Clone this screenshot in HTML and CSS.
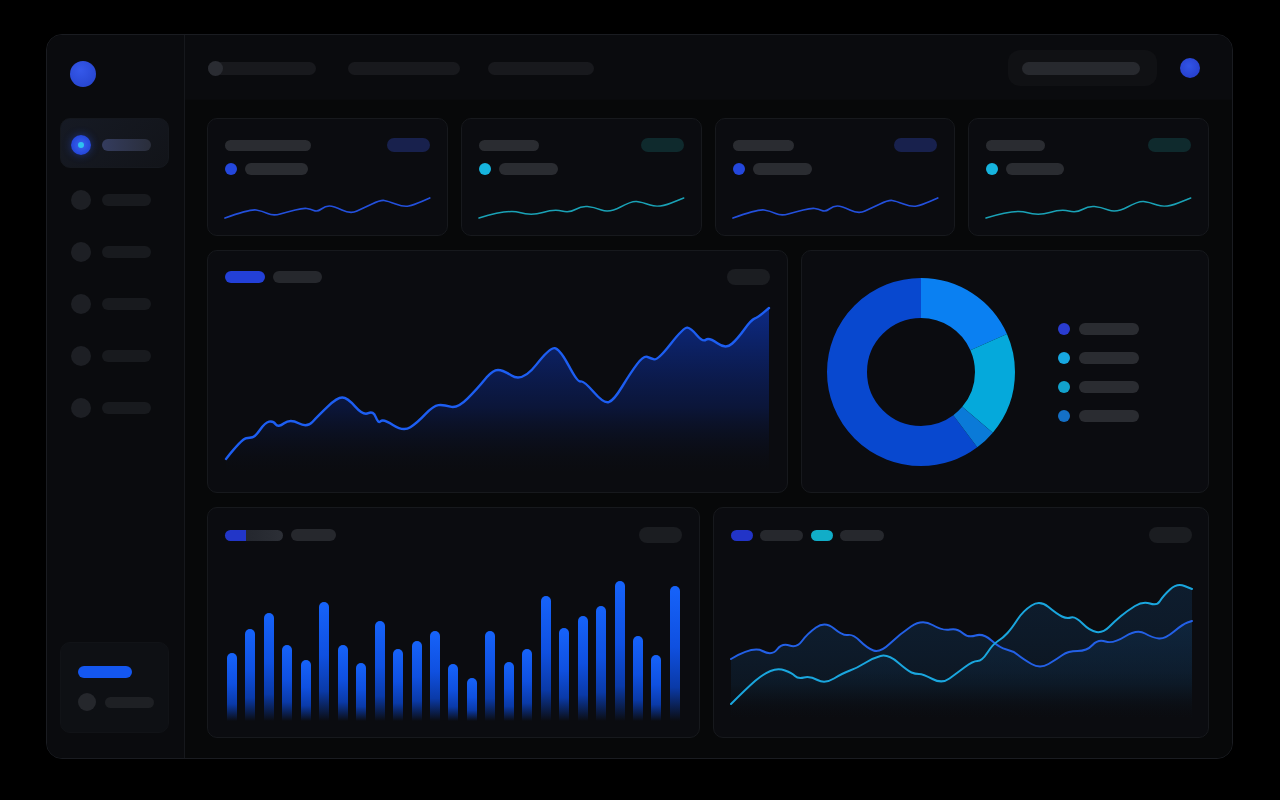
FILE: index.html
```html
<!DOCTYPE html>
<html lang="en">
<head>
<meta charset="utf-8">
<title>Dashboard</title>
<link rel="stylesheet" href="styles.css">
</head>
<body>
<div class="frame">
  <aside class="sidebar">
    <div class="logo"></div>
    <nav class="nav">
      <div class="nav-item active"><span class="nav-icon"><span class="nav-core"></span></span><span class="nav-bar"></span></div>
      <div class="nav-item"><span class="nav-icon"></span><span class="nav-bar"></span></div>
      <div class="nav-item"><span class="nav-icon"></span><span class="nav-bar"></span></div>
      <div class="nav-item"><span class="nav-icon"></span><span class="nav-bar"></span></div>
      <div class="nav-item"><span class="nav-icon"></span><span class="nav-bar"></span></div>
      <div class="nav-item"><span class="nav-icon"></span><span class="nav-bar"></span></div>
    </nav>
    <div class="side-card">
      <div class="side-cta"></div>
      <div class="side-user"><span class="avatar"></span><span class="side-line"></span></div>
    </div>
  </aside>

  <main class="main">
    <header class="topbar">
      <div class="crumbs">
        <span class="crumb crumb-1"><span class="crumb-dot"></span></span>
        <span class="crumb crumb-2"></span>
        <span class="crumb crumb-3"></span>
      </div>
      <div class="top-right">
        <div class="search"><span class="search-line"></span></div>
        <span class="user-dot"></span>
      </div>
    </header>

    <section class="content">
      <div class="stats">
        <div class="card stat-card">
          <div class="stat-head"><span class="sk title-a"></span><span class="badge badge-blue"></span></div>
          <div class="stat-row"><span class="dot dot-blue"></span><span class="sk value-a"></span></div>
          <svg class="spark" viewBox="0 0 204 26" preserveAspectRatio="none"><path class="spark-blue" d="M0,23 Q25,14 31,15 Q37,16 42.5,18.5 Q48,21 55,19 Q62,17 70,15 Q78,13 81.5,13.5 Q85,14 88.5,15.5 Q92,17 96,14 Q100,11 104,11 Q108,11 116.5,15 Q125,19 131.5,16 Q138,13 146.5,9 Q155,5 158.5,5.5 Q162,6 170,9 Q178,12 183,11 Q188,10 196,6.5 L204,3"/></svg>
        </div>
        <div class="card stat-card">
          <div class="stat-head"><span class="sk title-b"></span><span class="badge badge-teal"></span></div>
          <div class="stat-row"><span class="dot dot-cyan"></span><span class="sk value-b"></span></div>
          <svg class="spark" viewBox="0 0 204 26" preserveAspectRatio="none"><path class="spark-teal" d="M0,23 Q29,14 40.5,17.5 Q52,21 63.5,17.5 Q75,14 82.5,16 Q90,18 96,14.5 Q102,11 108,11.5 Q114,12 122,15 Q130,18 141,12 Q152,6 157,6.5 Q162,7 170.5,10 Q179,13 191.5,8 L204,3"/></svg>
        </div>
        <div class="card stat-card">
          <div class="stat-head"><span class="sk title-c"></span><span class="badge badge-blue"></span></div>
          <div class="stat-row"><span class="dot dot-blue"></span><span class="sk value-b"></span></div>
          <svg class="spark" viewBox="0 0 204 26" preserveAspectRatio="none"><path class="spark-blue" d="M0,23 Q25,14 31,15 Q37,16 42.5,18.5 Q48,21 55,19 Q62,17 70,15 Q78,13 81.5,13.5 Q85,14 88.5,15.5 Q92,17 96,14 Q100,11 104,11 Q108,11 116.5,15 Q125,19 131.5,16 Q138,13 146.5,9 Q155,5 158.5,5.5 Q162,6 170,9 Q178,12 183,11 Q188,10 196,6.5 L204,3"/></svg>
        </div>
        <div class="card stat-card">
          <div class="stat-head"><span class="sk title-d"></span><span class="badge badge-teal"></span></div>
          <div class="stat-row"><span class="dot dot-cyan"></span><span class="sk value-c"></span></div>
          <svg class="spark" viewBox="0 0 204 26" preserveAspectRatio="none"><path class="spark-teal" d="M0,23 Q29,14 40.5,17.5 Q52,21 63.5,17.5 Q75,14 82.5,16 Q90,18 96,14.5 Q102,11 108,11.5 Q114,12 122,15 Q130,18 141,12 Q152,6 157,6.5 Q162,7 170.5,10 Q179,13 191.5,8 L204,3"/></svg>
        </div>
      </div>

      <div class="row-mid">
        <div class="card area-card">
          <div class="chart-head">
            <div class="legend"><span class="pill pill-blue w40"></span><span class="pill pill-gray w49"></span></div>
            <span class="pill-btn"></span>
          </div>
          <svg class="area-chart" viewBox="0 0 544 172" preserveAspectRatio="none">
            <defs>
              <linearGradient id="areaFill" x1="0" y1="0" x2="0" y2="1">
                <stop offset="0" stop-color="#0d2f9a" stop-opacity="0.85"/>
                <stop offset="0.6" stop-color="#0b1c55" stop-opacity="0.6"/>
                <stop offset="1" stop-color="#0a0e1a" stop-opacity="0"/>
              </linearGradient>
            </defs>
            <path fill="url(#areaFill)" d="M1,158 Q17,138 21,137.5 Q25,137 27.5,136.5 Q30,136 35,129 Q40,122 44,121 Q48,120 50.5,123.5 Q53,127 59,122.5 Q65,118 73.5,122.5 Q82,127 87.5,121 Q93,115 102.5,106 Q112,97 117,97 Q122,97 130,106 Q138,115 143,112.5 Q148,110 150.5,116.5 Q153,123 155.5,120.5 Q158,118 168,124.5 Q178,131 185,126.5 Q192,122 200,113.5 Q208,105 213,104.5 Q218,104 225,106 Q232,108 242,98 Q252,88 258.5,80 Q265,72 270,70 Q275,68 286,75 Q297,82 311,64 Q325,46 330,48 Q335,50 343.5,66 Q352,82 355,81 Q358,80 368,91.5 Q378,103 383,101.5 Q388,100 396.5,86 Q405,72 411.5,63.5 Q418,55 421.5,56.5 Q425,58 428.5,59 Q432,60 445,43.5 Q458,27 461.5,27.5 Q465,28 471,35 Q477,42 480,39.5 Q483,37 491.5,43 Q500,49 506,43.5 Q512,38 518.5,29 Q525,20 528.5,18.5 Q532,17 537.5,12.5 L543,8 L543,172 L1,172 Z"/>
            <path class="area-line" d="M1,158 Q17,138 21,137.5 Q25,137 27.5,136.5 Q30,136 35,129 Q40,122 44,121 Q48,120 50.5,123.5 Q53,127 59,122.5 Q65,118 73.5,122.5 Q82,127 87.5,121 Q93,115 102.5,106 Q112,97 117,97 Q122,97 130,106 Q138,115 143,112.5 Q148,110 150.5,116.5 Q153,123 155.5,120.5 Q158,118 168,124.5 Q178,131 185,126.5 Q192,122 200,113.5 Q208,105 213,104.5 Q218,104 225,106 Q232,108 242,98 Q252,88 258.5,80 Q265,72 270,70 Q275,68 286,75 Q297,82 311,64 Q325,46 330,48 Q335,50 343.5,66 Q352,82 355,81 Q358,80 368,91.5 Q378,103 383,101.5 Q388,100 396.5,86 Q405,72 411.5,63.5 Q418,55 421.5,56.5 Q425,58 428.5,59 Q432,60 445,43.5 Q458,27 461.5,27.5 Q465,28 471,35 Q477,42 480,39.5 Q483,37 491.5,43 Q500,49 506,43.5 Q512,38 518.5,29 Q525,20 528.5,18.5 Q532,17 537.5,12.5 L543,8"/>
          </svg>
        </div>

        <div class="card donut-card">
          <svg class="donut" viewBox="0 0 188 188">
            <g transform="rotate(-90 94 94)">
              <circle class="seg" cx="94" cy="94" r="74" stroke="#0848cf" stroke-dasharray="280.27 464.96" stroke-dashoffset="-184.69"/>
              <circle class="seg" cx="94" cy="94" r="74" stroke="#0a80f2" stroke-dasharray="85.24 464.96" stroke-dashoffset="0"/>
              <circle class="seg" cx="94" cy="94" r="74" stroke="#05a9db" stroke-dasharray="82.66 464.96" stroke-dashoffset="-85.24"/>
              <circle class="seg" cx="94" cy="94" r="74" stroke="#0a7ad8" stroke-dasharray="16.79 464.96" stroke-dashoffset="-167.9"/>
            </g>
          </svg>
          <ul class="donut-legend">
            <li><span class="ldot ld-1"></span><span class="lbar"></span></li>
            <li><span class="ldot ld-2"></span><span class="lbar"></span></li>
            <li><span class="ldot ld-3"></span><span class="lbar"></span></li>
            <li><span class="ldot ld-4"></span><span class="lbar"></span></li>
          </ul>
        </div>
      </div>

      <div class="row-bottom">
        <div class="card bar-card">
          <div class="chart-head">
            <div class="legend"><span class="pill pill-split"></span><span class="pill pill-gray w45"></span></div>
            <span class="pill-btn"></span>
          </div>
          <div class="bars">
            <span class="bar" style="height:68px"></span>
            <span class="bar" style="height:92px"></span>
            <span class="bar" style="height:108px"></span>
            <span class="bar" style="height:76px"></span>
            <span class="bar" style="height:61px"></span>
            <span class="bar" style="height:119px"></span>
            <span class="bar" style="height:76px"></span>
            <span class="bar" style="height:58px"></span>
            <span class="bar" style="height:100px"></span>
            <span class="bar" style="height:72px"></span>
            <span class="bar" style="height:80px"></span>
            <span class="bar" style="height:90px"></span>
            <span class="bar" style="height:57px"></span>
            <span class="bar" style="height:43px"></span>
            <span class="bar" style="height:90px"></span>
            <span class="bar" style="height:59px"></span>
            <span class="bar" style="height:72px"></span>
            <span class="bar" style="height:125px"></span>
            <span class="bar" style="height:93px"></span>
            <span class="bar" style="height:105px"></span>
            <span class="bar" style="height:115px"></span>
            <span class="bar" style="height:140px"></span>
            <span class="bar" style="height:85px"></span>
            <span class="bar" style="height:66px"></span>
            <span class="bar" style="height:135px"></span>
          </div>
        </div>

        <div class="card line-card">
          <div class="chart-head">
            <div class="legend">
              <span class="pill pill-indigo w22"></span><span class="pill pill-gray w43"></span>
              <span class="pill pill-cyan w22 gap-left"></span><span class="pill pill-gray w44"></span>
            </div>
            <span class="pill-btn"></span>
          </div>
          <svg class="line-chart" viewBox="0 0 461 148" preserveAspectRatio="none">
            <defs>
              <linearGradient id="lineFill" x1="0" y1="0" x2="0" y2="1">
                <stop offset="0" stop-color="#133c66" stop-opacity="0.35"/>
                <stop offset="0.65" stop-color="#0e2338" stop-opacity="0.45"/>
                <stop offset="1" stop-color="#0a0e14" stop-opacity="0"/>
              </linearGradient>
            </defs>
            <path fill="url(#lineFill)" d="M0,88 Q22,75 31.5,80 Q41,85 46,78.5 Q51,72 58.5,74.5 Q66,77 71,70 Q76,63 85,56.5 Q94,50 103,57.5 Q112,65 117,64 Q122,63 129,70 Q136,77 142.5,79.5 Q149,82 159,72.5 Q169,63 180,55.5 Q191,48 201.5,54 Q212,60 219,58.5 Q226,57 231.5,62 Q237,67 244.5,64.5 Q252,62 260.5,69.5 Q269,77 275.5,78.5 Q282,80 287,84 Q292,88 300.5,93 Q309,98 317.5,93 Q326,88 331.5,84 Q337,80 346.5,80 Q356,80 361.5,74 Q367,68 374.5,70.5 Q382,73 394,65.5 Q406,58 414,62.5 Q422,67 428,67.5 Q434,68 443,60.5 Q452,53 456.5,51.5 L461,50 L461,148 L0,148 Z"/>
            <path fill="url(#lineFill)" d="M0,133 Q16,117 24,110 Q32,103 39.5,100 Q47,97 54,99.5 Q61,102 64,105 Q67,108 73,106.5 Q79,105 86.5,109 Q94,113 103,107.5 Q112,102 119,99.5 Q126,97 134,92 Q142,87 149.5,85 Q157,83 167,91.5 Q177,100 180.5,101.5 Q184,103 188,103 Q192,103 201.5,108 Q211,113 218.5,107.5 Q226,102 234,96 Q242,90 246.5,90 Q251,90 256.5,81.5 Q262,73 267,70 Q272,67 276.5,62 Q281,57 286.5,48.5 Q292,40 300.5,34.5 Q309,29 317.5,36 Q326,43 331,45.5 Q336,48 340,46.5 Q344,45 351.5,52.5 Q359,60 365.5,61 Q372,62 378,56 Q384,50 390,45 Q396,40 404,35 Q412,30 419,32.5 Q426,35 429,30 Q432,25 439,18.5 Q446,12 453.5,15 L461,18 L461,148 L0,148 Z"/>
            <path class="line-blue" d="M0,88 Q22,75 31.5,80 Q41,85 46,78.5 Q51,72 58.5,74.5 Q66,77 71,70 Q76,63 85,56.5 Q94,50 103,57.5 Q112,65 117,64 Q122,63 129,70 Q136,77 142.5,79.5 Q149,82 159,72.5 Q169,63 180,55.5 Q191,48 201.5,54 Q212,60 219,58.5 Q226,57 231.5,62 Q237,67 244.5,64.5 Q252,62 260.5,69.5 Q269,77 275.5,78.5 Q282,80 287,84 Q292,88 300.5,93 Q309,98 317.5,93 Q326,88 331.5,84 Q337,80 346.5,80 Q356,80 361.5,74 Q367,68 374.5,70.5 Q382,73 394,65.5 Q406,58 414,62.5 Q422,67 428,67.5 Q434,68 443,60.5 Q452,53 456.5,51.5 L461,50"/>
            <path class="line-cyan" d="M0,133 Q16,117 24,110 Q32,103 39.5,100 Q47,97 54,99.5 Q61,102 64,105 Q67,108 73,106.5 Q79,105 86.5,109 Q94,113 103,107.5 Q112,102 119,99.5 Q126,97 134,92 Q142,87 149.5,85 Q157,83 167,91.5 Q177,100 180.5,101.5 Q184,103 188,103 Q192,103 201.5,108 Q211,113 218.5,107.5 Q226,102 234,96 Q242,90 246.5,90 Q251,90 256.5,81.5 Q262,73 267,70 Q272,67 276.5,62 Q281,57 286.5,48.5 Q292,40 300.5,34.5 Q309,29 317.5,36 Q326,43 331,45.5 Q336,48 340,46.5 Q344,45 351.5,52.5 Q359,60 365.5,61 Q372,62 378,56 Q384,50 390,45 Q396,40 404,35 Q412,30 419,32.5 Q426,35 429,30 Q432,25 439,18.5 Q446,12 453.5,15 L461,18"/>
          </svg>
        </div>
      </div>
    </section>
  </main>
</div>
</body>
</html>
```

FILE: styles.css
```css
* { box-sizing: border-box; }

html, body {
  margin: 0;
  padding: 0;
  background: #000;
  font-family: "Inter", "Liberation Sans", sans-serif;
}

.frame {
  width: 1187px;
  height: 725px;
  margin: 34px 0 0 46px;
  display: flex;
  border: 1px solid #1a1c21;
  border-radius: 16px;
  background: #08090c;
  overflow: hidden;
}

/* ---------- sidebar ---------- */
.sidebar {
  width: 138px;
  flex: 0 0 138px;
  display: flex;
  flex-direction: column;
  padding: 26px 15px 25px 13px;
  background: #0a0b0e;
  border-right: 1px solid #16181c;
}

.logo {
  width: 26px;
  height: 26px;
  margin-left: 10px;
  border-radius: 50%;
  background: radial-gradient(circle at 40% 35%, #3558ea, #2341c9);
}

.nav {
  margin-top: 31px;
  display: flex;
  flex-direction: column;
}

.nav-item {
  height: 52px;
  display: flex;
  align-items: center;
  gap: 11px;
  padding-left: 11px;
}

.nav-item.active {
  height: 50px;
  margin-bottom: 6px;
  border-radius: 10px;
  background: linear-gradient(135deg, #161a24, #121419);
  border: 1px solid #15181e;
  padding-left: 10px;
  padding-top: 3px;
}

.nav-icon {
  width: 20px;
  height: 20px;
  border-radius: 50%;
  background: #1d1f24;
  display: flex;
  align-items: center;
  justify-content: center;
}

.active .nav-icon {
  background: radial-gradient(circle, #3a64f0 0%, #2446d9 70%);
  box-shadow: 0 0 8px rgba(40, 80, 230, 0.45);
}

.nav-core {
  width: 6px;
  height: 6px;
  border-radius: 50%;
  background: #2ec2ef;
}

.nav-bar {
  width: 49px;
  height: 12px;
  border-radius: 6px;
  background: #181a1e;
}

.active .nav-bar {
  background: linear-gradient(90deg, #343c5e, #2a2e3b);
}

.side-card {
  margin-top: auto;
  height: 91px;
  border-radius: 10px;
  background: #0e1014;
  border: 1px solid #111317;
  padding: 23px 0 0 17px;
}

.side-cta {
  width: 54px;
  height: 12px;
  border-radius: 6px;
  background: #1457f0;
}

.side-user {
  margin-top: 15px;
  display: flex;
  align-items: center;
  gap: 9px;
}

.avatar {
  width: 18px;
  height: 18px;
  border-radius: 50%;
  background: #25272c;
}

.side-line {
  width: 49px;
  height: 11px;
  border-radius: 6px;
  background: #1e2024;
}

/* ---------- main ---------- */
.main {
  flex: 1;
  display: flex;
  flex-direction: column;
  min-width: 0;
}

.topbar {
  height: 65px;
  flex: 0 0 65px;
  display: flex;
  align-items: center;
  justify-content: space-between;
  padding: 2px 32px 0 23px;
  background: #0a0b0e;
  border-bottom: 1px solid #090a0c;
}

.crumbs {
  display: flex;
  align-items: center;
}

.crumb {
  height: 13px;
  border-radius: 7px;
  background: #18191d;
  display: flex;
  align-items: center;
}

.crumb-1 { width: 108px; }
.crumb-2 { width: 112px; margin-left: 32px; }
.crumb-3 { width: 106px; margin-left: 28px; }

.crumb-dot {
  width: 15px;
  height: 15px;
  border-radius: 50%;
  background: #2a2c32;
}

.top-right {
  display: flex;
  align-items: center;
  gap: 23px;
}

.search {
  width: 149px;
  height: 36px;
  border-radius: 12px;
  background: #101114;
  display: flex;
  align-items: center;
  padding-left: 14px;
}

.search-line {
  width: 118px;
  height: 13px;
  border-radius: 7px;
  background: #27292e;
}

.user-dot {
  width: 20px;
  height: 20px;
  border-radius: 50%;
  background: radial-gradient(circle at 45% 40%, #3154e6, #2339c4);
}

.content {
  flex: 1;
  display: flex;
  flex-direction: column;
  gap: 14px;
  padding: 18px 23px 21px 22px;
  background: #070809;
}

.card {
  border-radius: 10px;
  background: #0b0c10;
  border: 1px solid #17191d;
}

.sk {
  height: 11px;
  border-radius: 6px;
  background: #2a2c31;
}

/* ---------- stat cards ---------- */
.stats {
  display: grid;
  grid-template-columns: repeat(4, 1fr);
  gap: 13px;
  height: 118px;
}

.stat-card {
  display: flex;
  flex-direction: column;
  padding: 19px 17px 14px 17px;
}

.stat-head {
  display: flex;
  justify-content: space-between;
  align-items: center;
  height: 14px;
}

.title-a { width: 86px; }
.title-b { width: 60px; }
.title-c { width: 61px; }
.title-d { width: 59px; }

.badge {
  width: 43px;
  height: 14px;
  border-radius: 7px;
}

.badge-blue { background: #18214d; }
.badge-teal { background: #0f2a2d; }

.stat-row {
  margin-top: 11px;
  display: flex;
  align-items: center;
  gap: 8px;
}

.stat-row .sk { height: 12px; }
.value-a { width: 63px; }
.value-b { width: 59px; }
.value-c { width: 58px; }

.dot {
  width: 12px;
  height: 12px;
  border-radius: 50%;
}

.dot-blue { background: #2447dc; }
.dot-cyan { background: #16b4de; }

.spark {
  margin-top: auto;
  width: 100%;
  height: 26px;
  overflow: visible;
}

.spark path {
  fill: none;
  stroke-linejoin: round;
  stroke-linecap: round;
}

.spark-blue { stroke: #2350dc; stroke-width: 1.7; }
.spark-teal { stroke: #1aa2b6; stroke-width: 1.5; }

/* ---------- chart headers ---------- */
.chart-head {
  display: flex;
  justify-content: space-between;
  align-items: center;
  height: 16px;
}

.legend {
  display: flex;
  align-items: center;
  gap: 8px;
}

.pill {
  height: 12px;
  border-radius: 6px;
}

.pill-blue { background: #2340d8; }
.pill-gray { background: #26282d; }
.pill-indigo { background: #2234c8; height: 11px; }
.pill-cyan { background: #11adc8; height: 11px; }

.line-card .pill-gray { height: 11px; }

.w22 { width: 22px; }
.w40 { width: 40px; }
.w43 { width: 43px; }
.w44 { width: 44px; }
.w45 { width: 45px; }
.w49 { width: 49px; }

.gap-left { margin-left: 1px; }

.pill-split {
  width: 58px;
  height: 11px;
  background: linear-gradient(90deg, #2236c8 0, #2236c8 21px, #24272e 21px, #2c2f36 100%);
}

.pill-btn {
  width: 43px;
  height: 16px;
  border-radius: 8px;
  background: #1b1d21;
}

/* ---------- middle row ---------- */
.row-mid {
  display: grid;
  grid-template-columns: 581px 1fr;
  gap: 13px;
  height: 243px;
}

.area-card {
  display: flex;
  flex-direction: column;
  padding: 18px 17px 19px 17px;
}

.area-chart {
  margin-top: 15px;
  flex: 1;
  width: 100%;
  overflow: visible;
}

.area-line {
  fill: none;
  stroke: #1d5ef2;
  stroke-width: 2.4;
  stroke-linejoin: round;
  stroke-linecap: round;
}

.donut-card {
  display: flex;
  align-items: center;
  padding-left: 25px;
}

.donut {
  width: 188px;
  height: 188px;
  flex: 0 0 188px;
}

.seg {
  fill: none;
  stroke-width: 40;
}

.donut-legend {
  list-style: none;
  margin: 2px 0 0 43px;
  padding: 0;
  display: flex;
  flex-direction: column;
  gap: 17px;
}

.donut-legend li {
  display: flex;
  align-items: center;
  gap: 9px;
  height: 12px;
}

.ldot {
  width: 12px;
  height: 12px;
  border-radius: 50%;
}

.ld-1 { background: #2a3cd0; }
.ld-2 { background: #17a8e2; }
.ld-3 { background: #12a2cc; }
.ld-4 { background: #1470c6; }

.lbar {
  width: 60px;
  height: 12px;
  border-radius: 6px;
  background: #2a2c31;
}

/* ---------- bottom row ---------- */
.row-bottom {
  flex: 1;
  display: grid;
  grid-template-columns: 493px 1fr;
  gap: 13px;
}

.bar-card {
  display: flex;
  flex-direction: column;
  padding: 19px 17px 16px 17px;
}

.bars {
  flex: 1;
  display: flex;
  align-items: flex-end;
  justify-content: space-between;
  padding: 0 2px 0 2px;
}

.bar {
  width: 10px;
  border-radius: 5px 5px 0 0;
  background: linear-gradient(180deg, #1663fa 0%, #0f50e0 45%, #0a3aa8 75%, rgba(8, 20, 60, 0) 100%);
}

.line-card {
  display: flex;
  flex-direction: column;
  padding: 19px 16px 18px 17px;
}

.line-card .legend { gap: 7px; }

.line-chart {
  margin-top: 28px;
  flex: 1;
  width: 100%;
  overflow: visible;
}

.line-blue, .line-cyan {
  fill: none;
  stroke-width: 2;
  stroke-linejoin: round;
  stroke-linecap: round;
}

.line-blue { stroke: #2360e6; }
.line-cyan { stroke: #1aa6de; }
```
